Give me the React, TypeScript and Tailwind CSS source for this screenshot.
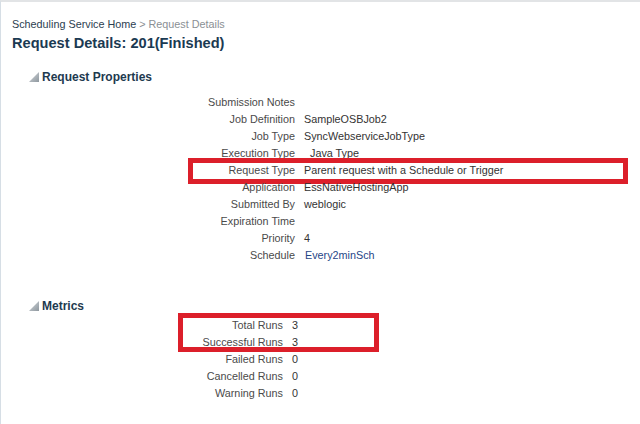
const properties: [string, string, string?][] = [
  ["Submission Notes", ""],
  ["Job Definition", "SampleOSBJob2"],
  ["Job Type", "SyncWebserviceJobType"],
  ["Execution Type", "\u00a0\u00a0Java Type"],
  ["Request Type", "Parent request with a Schedule or Trigger"],
  ["Application", "EssNativeHostingApp"],
  ["Submitted By", "weblogic"],
  ["Expiration Time", ""],
  ["Priority", "4"],
  ["Schedule", "Every2minSch", "link"],
];

const metrics: [string, string][] = [
  ["Total Runs", "3"],
  ["Successful Runs", "3"],
  ["Failed Runs", "0"],
  ["Cancelled Runs", "0"],
  ["Warning Runs", "0"],
];

function Disclosure() {
  return (
    <svg width="10" height="10" viewBox="0 0 10 10" className="mr-[3px] shrink-0">
      <defs>
        <linearGradient id="tri" x1="0" y1="0" x2="1" y2="1">
          <stop offset="0" stopColor="#d4d9dd" />
          <stop offset="1" stopColor="#8e979e" />
        </linearGradient>
      </defs>
      <polygon points="0,10 10,10 10,0" fill="url(#tri)" />
    </svg>
  );
}

function SectionHeader({ title }: { title: string }) {
  return (
    <div className="flex items-center pl-[28px] h-[16px] text-[12px] font-bold text-[#1e3a4f]">
      <Disclosure />
      <span>{title}</span>
    </div>
  );
}

export default function App() {
  return (
    <div className="w-[640px] h-[424px] bg-white border-t-2 border-t-[#e2e4e6] border-l border-l-[#d6dee5] font-['Liberation_Sans',Arial,sans-serif] text-[10.8px] text-[#3c3c3c] overflow-hidden">
      <div className="pt-[14px] pl-[11px] h-[16px] leading-[16px] box-content text-[10.8px]">
        <span className="text-[#2c3e50]">Scheduling Service Home</span>
        <span className="text-[#8a8f94]"> &gt; Request Details</span>
      </div>
      <h1 className="mt-[1px] pl-[11px] h-[20px] leading-[20px] text-[14.6px] font-bold text-[#1b3a52]">
        Request Details: 201(Finished)
      </h1>

      <div className="mt-[16px]">
        <SectionHeader title="Request Properties" />
        <div className="mt-[9px] flex flex-col">
          {properties.map(([label, value, kind]) => (
            <div key={label} className="relative flex h-[17px] leading-[17px]">
              <div className="w-[294px] text-right text-[#4a4a4a]">{label}</div>
              <div className={"ml-[9px] " + (kind === "link" ? "text-[#1f4687] pl-[1px]" : "text-[#333333]")}>
                {value}
              </div>
              {label === "Request Type" && (
                <div className="absolute left-[187px] top-[-4px] w-[440px] h-[26px] border-[5px] border-[#dc1f2a]" />
              )}
            </div>
          ))}
        </div>
      </div>

      <div className="mt-[34px]">
        <SectionHeader title="Metrics" />
        <div className="mt-[3px] flex flex-col">
          {metrics.map(([label, value], i) => (
            <div key={label} className="relative flex h-[17px] leading-[17px]">
              <div className="w-[282px] text-right text-[#4a4a4a]">{label}</div>
              <div className="ml-[9px] text-[#333333]">{value}</div>
              {i === 0 && (
                <div className="absolute left-[177px] top-[-4px] w-[201px] h-[39px] border-[5px] border-[#dc1f2a]" />
              )}
            </div>
          ))}
        </div>
      </div>
    </div>
  );
}
